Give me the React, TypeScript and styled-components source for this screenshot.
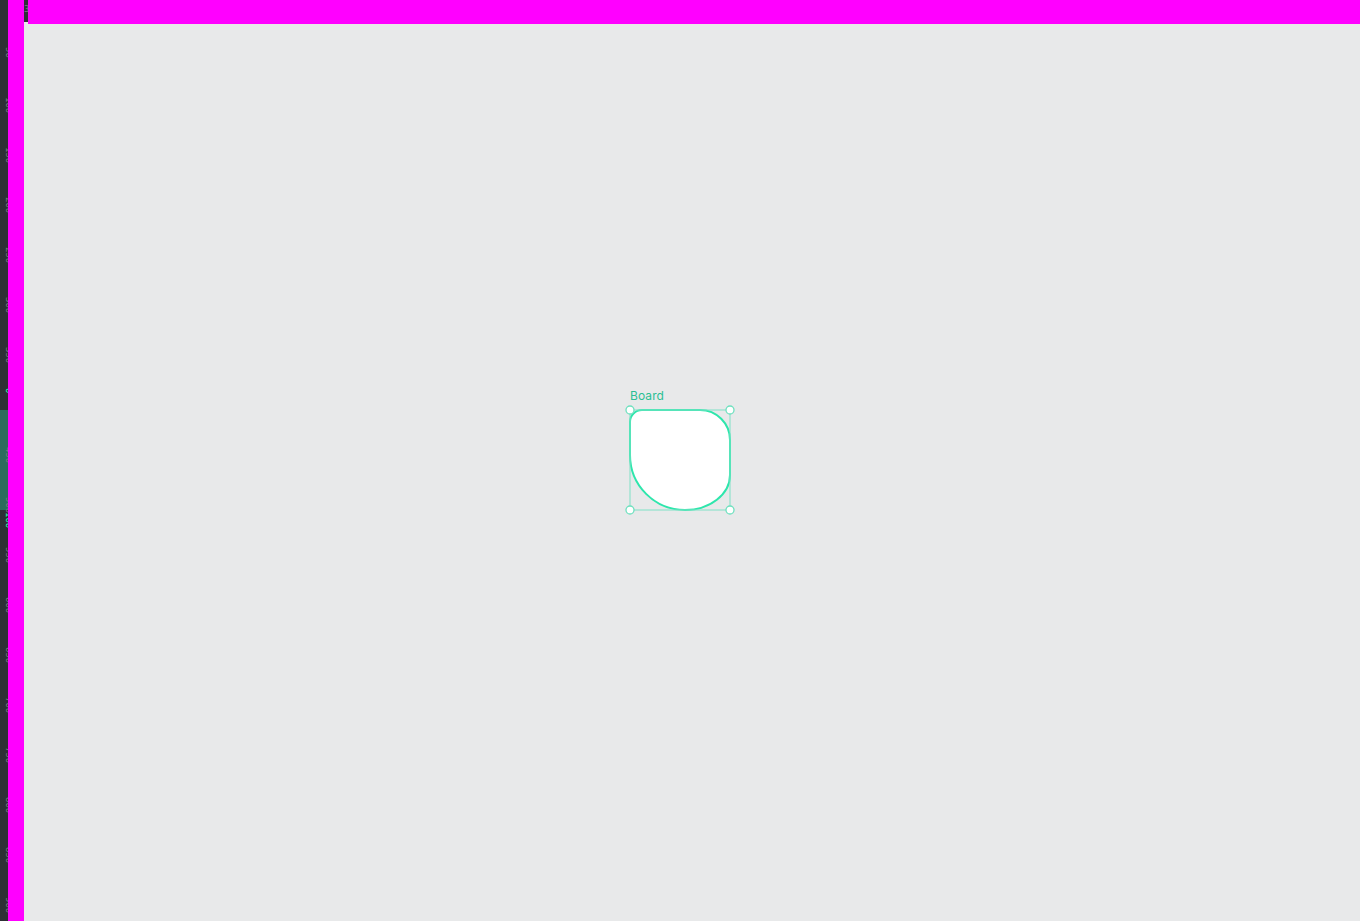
import React from "react";
import styled, { createGlobalStyle } from "styled-components";

const Global = createGlobalStyle`
  html, body { margin: 0; padding: 0; width: 100%; height: 100%; overflow: hidden; }
  body { font-family: "Inter", "Open Sans", sans-serif; background: #e8e9ea; }
  #root { width: 100%; height: 100%; }
`;

const Shell = styled.div`
  display: flex;
  width: 1360px;
  height: 921px;
  overflow: hidden;
`;

const Ruler = styled.div`
  position: relative;
  flex: 0 0 8px;
  height: 100%;
  background: #2e3035;
  overflow: hidden;
`;

const RulerHighlight = styled.div<{ $top: number; $height: number }>`
  position: absolute;
  left: 0;
  right: 0;
  top: ${(p) => p.$top}px;
  height: ${(p) => p.$height}px;
  background: #2c6b5c;
`;

const RulerLabel = styled.span<{ $top: number; $active?: boolean }>`
  position: absolute;
  left: 4px;
  top: ${(p) => p.$top}px;
  font-family: "DejaVu Sans Mono", monospace;
  font-size: 9px;
  line-height: 10px;
  writing-mode: vertical-rl;
  color: ${(p) => (p.$active ? "#31efb8" : "#7a7d85")};
  white-space: nowrap;
`;

const Stripe = styled.div`
  flex: 0 0 16px;
  height: 100%;
  background: #ff00ff;
`;

const Main = styled.div`
  flex: 1;
  display: flex;
  flex-direction: column;
  min-width: 0;
`;

const TopBar = styled.div`
  flex: 0 0 24px;
  display: flex;
`;

const TopRulerStub = styled.div`
  flex: 0 0 4px;
  height: 22px;
  background: #2e3035;
  overflow: hidden;
  color: #7a7d85;
  font-family: "DejaVu Sans Mono", monospace;
  font-size: 9px;
  line-height: 10px;
  padding-top: 4px;
  box-sizing: border-box;
`;

const TopFill = styled.div`
  flex: 1;
  background: #ff00ff;
`;

const Canvas = styled.div`
  position: relative;
  flex: 1;
  background: #e8e9ea;
  overflow: hidden;
`;

const BoardTitle = styled.div`
  position: absolute;
  left: 606px;
  top: 364px;
  font-family: "Inter", "Open Sans", sans-serif;
  font-size: 12px;
  color: #2bbf94;
  letter-spacing: 0.1px;
`;

const BoardArt = styled.svg`
  position: absolute;
  left: 596px;
  top: 376px;
`;

const labels = [47, 97, 147, 197, 247, 297, 347, 447, 497, 547, 597, 647, 697, 747, 797, 847, 897];

export default function App() {
  return (
    <>
      <Global />
      <Shell>
        <Ruler>
          <RulerHighlight $top={410} $height={100} />
          {labels.map((t) => (
            <RulerLabel key={t} $top={t}>
              {String(t + 3)}
            </RulerLabel>
          ))}
          <RulerLabel $top={388} $active>
            0
          </RulerLabel>
          <RulerLabel $top={512} $active>
            100
          </RulerLabel>
        </Ruler>
        <Stripe />
        <Main>
          <TopBar>
            <TopRulerStub>3</TopRulerStub>
            <TopFill />
          </TopBar>
          <Canvas>
            <BoardTitle>Board</BoardTitle>
            <BoardArt width="120" height="120" viewBox="596 376 120 120">
              <path
                d="M618 386 H676 A30 30 0 0 1 706 416 V451 A45 35 0 0 1 661 486 A55 55 0 0 1 606 431 V398 A12 12 0 0 1 618 386 Z"
                fill="#ffffff"
                stroke="#2ee6ac"
                strokeWidth="2"
              />
              <rect x="606" y="386" width="100" height="100" fill="none" stroke="#7fe2c6" strokeWidth="1" />
              {[
                [606, 386],
                [706, 386],
                [606, 486],
                [706, 486],
              ].map(([cx, cy]) => (
                <circle key={`${cx}-${cy}`} cx={cx} cy={cy} r="4" fill="#ffffff" stroke="#6fe0bf" strokeWidth="1.3" />
              ))}
            </BoardArt>
          </Canvas>
        </Main>
      </Shell>
    </>
  );
}
